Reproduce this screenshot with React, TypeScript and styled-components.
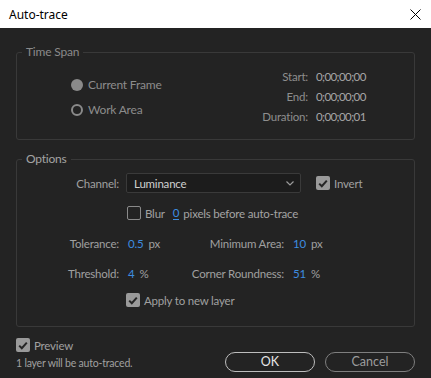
import React from 'react';
import styled, { createGlobalStyle } from 'styled-components';

const Global = createGlobalStyle`
  html, body { margin: 0; padding: 0; background: #232323; }
  body {
    width: 431px; height: 378px; overflow: hidden;
    font-family: Lato, "Open Sans", sans-serif;
    font-size: 11.5px; letter-spacing: -0.2px; color: #a3a3a3;
  }
  * { box-sizing: border-box; }
`;

const Dialog = styled.div`
  width: 431px; height: 378px;
  display: flex; flex-direction: column;
  background: #232323;
  white-space: nowrap;
`;

const TitleBar = styled.div`
  height: 28px; flex: none;
  background: #ffffff;
  display: flex; align-items: center; justify-content: space-between;
  padding: 0 10px 0 9px;
  font-family: "Noto Sans", "Open Sans", sans-serif;
  font-size: 12px; letter-spacing: 0; color: #000;
`;

const Body = styled.div`
  padding: 0 16px;
  display: flex; flex-direction: column;
`;

const Group = styled.fieldset<{ $mt: number }>`
  margin: ${p => p.$mt}px 0 0;
  padding: 0;
  border: 1px solid #393939;
  border-radius: 3px;
  min-width: 0;
`;

const Legend = styled.legend<{ $dim?: boolean }>`
  margin-left: 5px;
  padding: 0 4px;
  font-size: 12px; line-height: 16px;
  color: ${p => (p.$dim ? '#8a8a8a' : '#a3a3a3')};
`;

const SpanContent = styled.div`
  display: flex; align-items: flex-start;
  padding: 6px 48px 13px 54px;
`;

const RadioCol = styled.div`
  display: flex; flex-direction: column; gap: 5px;
  margin-top: 8px;
`;

const RadioRow = styled.div`
  height: 20px; display: flex; align-items: center; gap: 5px;
  color: #8c8c8c; font-size: 12px;
`;

const RadioDot = styled.span<{ $on?: boolean }>`
  width: 12px; height: 12px; border-radius: 50%;
  margin-top: 1px;
  ${p => (p.$on ? 'background: #8a8a8a;' : 'border: 2px solid #8a8a8a;')}
`;

const TimeGrid = styled.div`
  margin-left: auto;
  display: grid;
  grid-template-columns: auto 50px;
  grid-auto-rows: 20px;
  column-gap: 8px;
  align-items: center;
`;

const TimeLabel = styled.span`
  text-align: right; color: #8e8e8e;
`;

const TimeValue = styled.span`
  color: #a6a6a6; letter-spacing: -0.6px;
`;

const OptionsContent = styled.div`
  display: flex; flex-direction: column;
  padding: 6px 0 16px 0;
`;

const Row = styled.div<{ $mt?: number; $pl?: number }>`
  height: 20px; display: flex; align-items: center;
  margin-top: ${p => p.$mt ?? 0}px;
  padding-left: ${p => p.$pl ?? 0}px;
`;

const Label = styled.span<{ $w: number }>`
  width: ${p => p.$w}px; flex: none; text-align: right;
  color: #a0a0a0;
`;

const Select = styled.div`
  width: 175px; height: 20px; margin-left: 7px;
  background: #1c1c1c;
  border: 1px solid #3a3a3a; border-radius: 2px;
  display: flex; align-items: center; justify-content: space-between;
  padding: 0 6px 0 7px;
  color: #d0d0d0;
`;

const CheckLabel = styled.label<{ $ml?: number }>`
  display: flex; align-items: center; gap: 4px;
  margin-left: ${p => p.$ml ?? 0}px;
  color: #a0a0a0;
`;

const Box = styled.span<{ $on?: boolean }>`
  width: 14px; height: 14px; flex: none; border-radius: 2px;
  display: flex; align-items: center; justify-content: center;
  ${p => (p.$on ? 'background: #9a9a9a;' : 'border: 1.5px solid #8a8a8a;')}
`;

const Num = styled.span<{ $u?: boolean }>`
  color: #3d8de0;
  ${p => (p.$u ? 'border-bottom: 1px solid #3d8de0; line-height: 13px;' : '')}
`;

const Unit = styled.span`
  color: #a0a0a0; margin-left: 5px;
`;

const ValueCell = styled.span<{ $w?: number }>`
  display: flex; align-items: center;
  margin-left: 9px;
  width: ${p => (p.$w ? `${p.$w}px` : 'auto')};
`;

const Gap = styled.span<{ $w: number }>`
  display: inline-block; width: ${p => p.$w}px;
`;

const Footer = styled.div`
  display: flex; align-items: flex-start; justify-content: space-between;
  margin-top: 10px;
`;

const FooterLeft = styled.div`
  display: flex; flex-direction: column;
`;

const PreviewRow = styled.div`
  height: 16px; display: flex; align-items: center; gap: 4px;
  color: #a0a0a0;
`;

const Caption = styled.div`
  margin-top: 3px;
  font-size: 10.5px; line-height: 14px; color: #a0a0a0;
`;

const Buttons = styled.div`
  display: flex; gap: 10px; margin-top: 15px;
`;

const Button = styled.button<{ $primary?: boolean }>`
  width: 90px; height: 20px; padding: 0;
  border-radius: 10px;
  background: transparent;
  border: 1px solid ${p => (p.$primary ? '#bdbdbd' : '#7f7f7f')};
  color: ${p => (p.$primary ? '#e6e6e6' : '#9c9c9c')};
  font-family: Lato, "Open Sans", sans-serif;
  font-size: 12.5px; line-height: 18px;
`;

const Check = () => (
  <svg width="10" height="9" viewBox="0 0 10 9">
    <path d="M1.2 4.6 L3.8 7.2 L8.8 1.6" fill="none" stroke="#262626" strokeWidth="2" />
  </svg>
);

const CheckBox = ({ on }: { on?: boolean }) => <Box $on={on}>{on ? <Check /> : null}</Box>;

const Close = () => (
  <svg width="11" height="11" viewBox="0 0 11 11">
    <path d="M0.5 0.5 L10.5 10.5 M10.5 0.5 L0.5 10.5" stroke="#000" strokeWidth="1" />
  </svg>
);

const Chevron = () => (
  <svg width="8" height="5" viewBox="0 0 8 5">
    <path d="M0.5 0.5 L4 4 L7.5 0.5" fill="none" stroke="#9a9a9a" strokeWidth="1.2" />
  </svg>
);

const times: [string, string][] = [
  ['Start:', '0;00;00;00'],
  ['End:', '0;00;00;00'],
  ['Duration:', '0;00;00;01'],
];

export default function App() {
  return (
    <Dialog>
      <Global />
      <TitleBar>
        <span>Auto-trace</span>
        <Close />
      </TitleBar>
      <Body>
        <Group $mt={16}>
          <Legend $dim>Time Span</Legend>
          <SpanContent>
            <RadioCol>
              <RadioRow><RadioDot $on />Current Frame</RadioRow>
              <RadioRow><RadioDot />Work Area</RadioRow>
            </RadioCol>
            <TimeGrid>
              {times.map(([l, v]) => (
                <React.Fragment key={l}>
                  <TimeLabel>{l}</TimeLabel>
                  <TimeValue>{v}</TimeValue>
                </React.Fragment>
              ))}
            </TimeGrid>
          </SpanContent>
        </Group>

        <Group $mt={11}>
          <Legend>Options</Legend>
          <OptionsContent>
            <Row>
              <Label $w={102}>Channel:</Label>
              <Select>
                <span>Luminance</span>
                <Chevron />
              </Select>
              <CheckLabel $ml={15}><CheckBox on />Invert</CheckLabel>
            </Row>
            <Row $mt={10} $pl={110}>
              <CheckLabel><CheckBox />Blur</CheckLabel>
              <Gap $w={8} />
              <Num $u>0</Num>
              <Gap $w={4} />
              <span>pixels before auto-trace</span>
            </Row>
            <Row $mt={10}>
              <Label $w={102}>Tolerance:</Label>
              <ValueCell $w={55}><Num>0.5</Num><Unit>px</Unit></ValueCell>
              <Label $w={101}>Minimum Area:</Label>
              <ValueCell><Num>10</Num><Unit>px</Unit></ValueCell>
            </Row>
            <Row $mt={10}>
              <Label $w={102}>Threshold:</Label>
              <ValueCell $w={55}><Num>4</Num><Unit>%</Unit></ValueCell>
              <Label $w={101}>Corner Roundness:</Label>
              <ValueCell><Num>51</Num><Unit>%</Unit></ValueCell>
            </Row>
            <Row $mt={7} $pl={109}>
              <CheckLabel><CheckBox on />Apply to new layer</CheckLabel>
            </Row>
          </OptionsContent>
        </Group>

        <Footer>
          <FooterLeft>
            <PreviewRow><CheckBox on />Preview</PreviewRow>
            <Caption>1 layer will be auto-traced.</Caption>
          </FooterLeft>
          <Buttons>
            <Button $primary>OK</Button>
            <Button>Cancel</Button>
          </Buttons>
        </Footer>
      </Body>
    </Dialog>
  );
}
